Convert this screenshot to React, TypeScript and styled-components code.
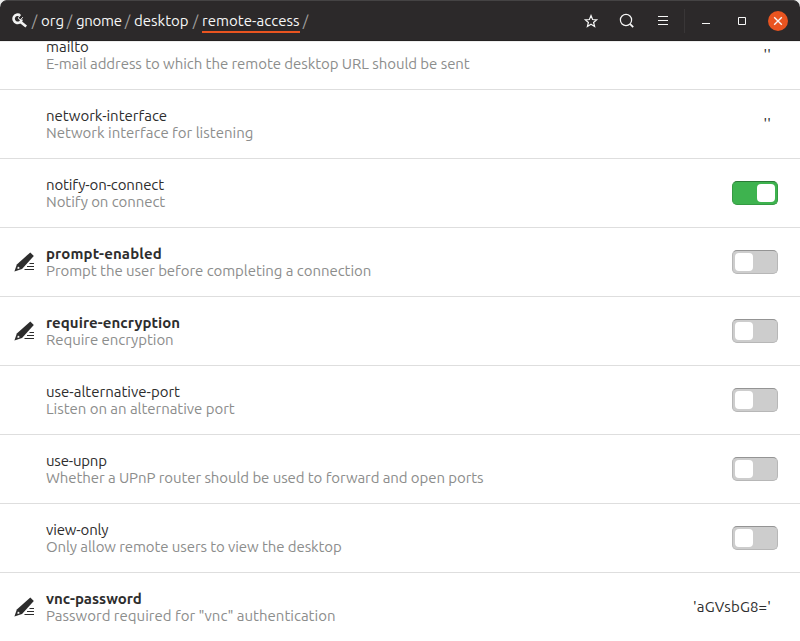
import React from "react";
import styled, { createGlobalStyle, css } from "styled-components";

const GlobalStyle = createGlobalStyle`
  * { box-sizing: border-box; }
  body {
    margin: 0;
    background: #ececec;
    font-family: Ubuntu, "Noto Sans", "Open Sans", sans-serif;
    font-size: 15px;
    overflow: hidden;
  }
`;

const Window = styled.div`
  display: flex;
  flex-direction: column;
  width: 800px;
  height: 641px;
  overflow: hidden;
  border-radius: 7px 7px 0 0;
  background: #fff;
`;

const HeaderBar = styled.header`
  display: flex;
  flex: none;
  align-items: center;
  justify-content: space-between;
  height: 41px;
  padding: 0 4px 0 12px;
  background: #2c292a;
  border-radius: 7px 7px 0 0;
  box-shadow: inset 0 1px #454344, inset 0 -1px #242122;
  color: #f7f7f7;
`;

const PathBar = styled.nav`
  display: flex;
  align-items: center;
  height: 41px;
`;

const PathIcon = styled.svg`
  width: 16px;
  height: 16px;
  margin-right: 3px;
`;

const Slash = styled.span`
  width: 7px;
  margin-right: 3px;
  text-align: center;
  line-height: 24px;
  color: #a3a1a0;
`;

const Crumb = styled.a<{ $width: number; $tracking?: number; $current?: boolean }>`
  width: ${(p) => p.$width}px;
  height: 24px;
  margin: 1px 2px 0 0;
  line-height: 23px;
  white-space: nowrap;
  letter-spacing: ${(p) => p.$tracking ?? 0}px;
  border-bottom: 2px solid ${(p) => (p.$current ? "#e95420" : "transparent")};
`;

const Controls = styled.div`
  display: flex;
  align-items: center;
`;

const IconButton = styled.button`
  display: flex;
  align-items: center;
  justify-content: center;
  width: 36px;
  height: 36px;
  padding: 0;
  border: 0;
  background: none;
  color: inherit;
  svg { width: 16px; height: 16px; }
`;

const Divider = styled.span`
  width: 1px;
  height: 24px;
  margin: 0 3px;
  background: #393637;
`;

const CloseDisc = styled.span`
  display: flex;
  align-items: center;
  justify-content: center;
  width: 20px;
  height: 20px;
  border-radius: 50%;
  background: #e95420;
`;

const Viewport = styled.main`
  flex: 1;
  min-height: 0;
  overflow: hidden;
  box-shadow: inset 0 1px #eeeeee;
`;

const KeyList = styled.ul`
  list-style: none;
  margin: -20px 0 0;
  padding: 0;
`;

const Row = styled.li`
  display: flex;
  align-items: center;
  height: 69px;
  padding-right: 22px;
  border-bottom: 1px solid #dedede;
`;

const Marker = styled.div`
  display: flex;
  width: 46px;
  padding-left: 14px;
  svg { width: 21px; height: 20px; }
`;

const Labels = styled.div`
  flex: 1;
  padding-bottom: 1px;
  line-height: 17px;
  white-space: nowrap;
`;

const KeyName = styled.div<{ $modified?: boolean; $tracking?: number }>`
  color: #2d2d2d;
  letter-spacing: ${(p) => p.$tracking ?? 0}px;
  ${(p) => p.$modified && css`font-weight: 700;`}
`;

const Summary = styled.div<{ $tracking?: number }>`
  color: #8c8d8c;
  letter-spacing: ${(p) => p.$tracking ?? 0}px;
`;

const Value = styled.span`
  margin-right: 7px;
  padding-bottom: 2px;
  letter-spacing: 0.15px;
  color: #2d2d2d;
`;

const Switch = styled.span<{ $on: boolean }>`
  display: flex;
  align-items: center;
  justify-content: ${(p) => (p.$on ? "flex-end" : "flex-start")};
  width: 46px;
  height: 24px;
  padding: 0 2px;
  border: 1px solid ${(p) => (p.$on ? "#359a43" : "#b7b7b7")};
  border-top-color: ${(p) => (p.$on ? "#2a7a36" : "#949494")};
  border-radius: 5px;
  background: ${(p) => (p.$on ? "#3eb34f" : "#cdcdcd")};
`;

const Knob = styled.span`
  width: 18px;
  height: 18px;
  border-radius: 4px;
  background: #fff;
`;

const PencilIcon = () => (
  <svg viewBox="0 0 21 20" fill="#2d2d2d">
    <path d="M16.3.4 19.8 4 8 17 .4 19.6 2.8 12.4Z" />
    <path d="m4 14.4 1.9 1.6-1.9.9-.7-.6Z" fill="#fff" />
    <path d="M15.5 11.5H20M13 14.5h7M10.5 17.5H20" stroke="#2d2d2d" strokeWidth="1.2" />
  </svg>
);

const crumbs = [
  { name: "org", width: 23 },
  { name: "gnome", width: 46, tracking: -0.3 },
  { name: "desktop", width: 56 },
  { name: "remote-access", width: 98, tracking: 0.04, current: true },
];

type Key = {
  name: string;
  summary: string;
  value: string | boolean;
  modified?: boolean;
  nameTracking?: number;
  summaryTracking?: number;
};

const keys: Key[] = [
  { name: "mailto", summary: "E-mail address to which the remote desktop URL should be sent", value: "''", summaryTracking: -0.06 },
  { name: "network-interface", summary: "Network interface for listening", value: "''" },
  { name: "notify-on-connect", summary: "Notify on connect", value: true, nameTracking: -0.13, summaryTracking: -0.08 },
  { name: "prompt-enabled", summary: "Prompt the user before completing a connection", value: false, modified: true, nameTracking: 0.13, summaryTracking: -0.06 },
  { name: "require-encryption", summary: "Require encryption", value: false, modified: true, nameTracking: 0.06, summaryTracking: -0.06 },
  { name: "use-alternative-port", summary: "Listen on an alternative port", value: false, summaryTracking: -0.04 },
  { name: "use-upnp", summary: "Whether a UPnP router should be used to forward and open ports", value: false, nameTracking: -0.2, summaryTracking: -0.08 },
  { name: "view-only", summary: "Only allow remote users to view the desktop", value: false, nameTracking: -0.15, summaryTracking: -0.09 },
  { name: "vnc-password", summary: 'Password required for "vnc" authentication', value: "'aGVsbG8='", modified: true },
];

export default function App() {
  return (
    <>
      <GlobalStyle />
      <Window>
        <HeaderBar>
          <PathBar>
            <PathIcon viewBox="0 0 16 16" fill="none" stroke="#f2f2f2">
              <path d="M8 2.4A4.1 4.1 0 1 0 9.7 6.6" strokeWidth="2.6" />
              <path d="M8.6 2 6.4 4.6l.6 1.6 1.8.3 2-2.3" strokeWidth="1" />
              <path d="m8.6 9 5.6 4.6" strokeWidth="2.6" />
            </PathIcon>
            <Slash>/</Slash>
            {crumbs.map((c) => (
              <React.Fragment key={c.name}>
                <Crumb $width={c.width} $tracking={c.tracking} $current={c.current}>{c.name}</Crumb>
                <Slash>/</Slash>
              </React.Fragment>
            ))}
          </PathBar>
          <Controls>
            <IconButton aria-label="Bookmark">
              <svg viewBox="0 0 16 16" fill="none" stroke="currentColor" strokeWidth="1.2">
                <path d="m8 2.6 1.6 3.9 4.1.3-3.1 2.7 1 4L8 11.3l-3.6 2.2 1-4-3.1-2.7 4.1-.3Z" />
              </svg>
            </IconButton>
            <IconButton aria-label="Search">
              <svg viewBox="0 0 16 16" fill="none" stroke="currentColor" strokeWidth="1.2">
                <circle cx="7" cy="7" r="5.6" />
                <path d="m11.2 11.2 3 3" strokeWidth="1.8" />
              </svg>
            </IconButton>
            <IconButton aria-label="Menu">
              <svg viewBox="0 0 16 16" fill="currentColor">
                <path d="M3 3h10v1H3zM3 7h10v1H3zM3 11h10v1H3z" />
              </svg>
            </IconButton>
            <Divider />
            <IconButton aria-label="Minimize">
              <svg viewBox="0 0 16 16" fill="currentColor"><path d="M4 10h8v1H4z" /></svg>
            </IconButton>
            <IconButton aria-label="Maximize">
              <svg viewBox="0 0 16 16" fill="none" stroke="currentColor"><path d="M4.5 4.5h7v7h-7z" /></svg>
            </IconButton>
            <IconButton aria-label="Close">
              <CloseDisc>
                <svg viewBox="0 0 16 16" fill="none" stroke="currentColor" strokeWidth="1.4">
                  <path d="m4.2 4.2 7.6 7.6m0-7.6-7.6 7.6" />
                </svg>
              </CloseDisc>
            </IconButton>
          </Controls>
        </HeaderBar>
        <Viewport>
          <KeyList>
            {keys.map((k) => (
              <Row key={k.name}>
                <Marker>{k.modified && <PencilIcon />}</Marker>
                <Labels>
                  <KeyName $modified={k.modified} $tracking={k.nameTracking}>{k.name}</KeyName>
                  <Summary $tracking={k.summaryTracking}>{k.summary}</Summary>
                </Labels>
                {typeof k.value === "boolean" ? (
                  <Switch $on={k.value}><Knob /></Switch>
                ) : (
                  <Value>{k.value}</Value>
                )}
              </Row>
            ))}
          </KeyList>
        </Viewport>
      </Window>
    </>
  );
}
